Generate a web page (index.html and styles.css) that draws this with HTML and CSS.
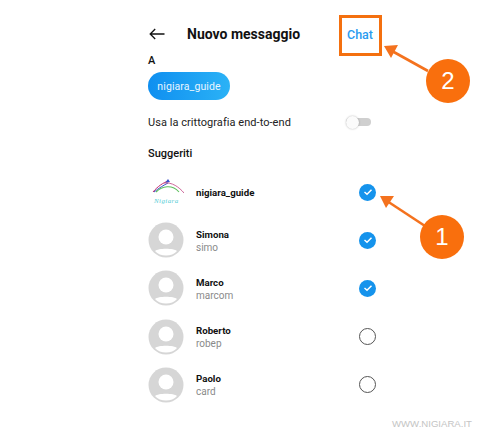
FILE: index.html
```html
<!DOCTYPE html>
<html lang="it">
<head>
<meta charset="utf-8">
<title>Nuovo messaggio</title>
<link rel="stylesheet" href="styles.css">
</head>
<body>
<main class="screen">
  <header class="topbar">
    <svg class="back" width="16" height="12" viewBox="0 0 16 12" aria-hidden="true"><path d="M15.5 6H1.2M6.2 1 1.2 6l5 5" fill="none" stroke="#111" stroke-width="1.3"/></svg>
    <h1 class="title">Nuovo messaggio</h1>
    <span class="chat">Chat</span>
  </header>
  <div class="label to">A</div>
  <div class="pill">nigiara_guide</div>
  <div class="crypt">
    <span>Usa la crittografia end-to-end</span>
    <span class="toggle"><span class="knob"></span></span>
  </div>
  <div class="label sugg">Suggeriti</div>
  <ul class="list">
    <li class="row">
      <svg class="avatar" width="36" height="36" viewBox="0 0 36 36" aria-hidden="true">
        <path d="M5 18C10 12 15 9 20 7" fill="none" stroke="#c2276e" stroke-width="1"/>
        <path d="M6 18C11 14 16 11 20 9" fill="none" stroke="#3a4fc8" stroke-width="1"/>
        <path d="M20 5 22 8 17 9Z" fill="#3a4fc8"/>
        <path d="M16 9C24 8 31 13 36 19" fill="none" stroke="#c8588f" stroke-width=".9"/>
        <path d="M8 18C14 12 24 10 31 18" fill="none" stroke="#5cc05c" stroke-width="1.1"/>
        <text class="logo-text" x="6" y="29">Nigiara</text>
      </svg>
      <div class="who"><div class="name">nigiara_guide</div></div>
      <span class="check on"><svg width="10" height="8" viewBox="0 0 10 8" aria-hidden="true"><path d="M1.5 4 4 6.2 8.5 1.8" fill="none" stroke="#fff" stroke-width="1.5"/></svg></span>
    </li>
    <li class="row">
      <svg class="avatar" width="36" height="36" viewBox="0 0 36 36" aria-hidden="true"><circle cx="18" cy="18" r="17.5" fill="#d6d6d6"/><circle cx="18" cy="15" r="7.5" fill="#fff"/><path d="M7 29c3-3 19-3 22 0-5 6-17 6-22 0Z" fill="#fff"/></svg>
      <div class="who"><div class="name">Simona</div><div class="sub">simo</div></div>
      <span class="check on"><svg width="10" height="8" viewBox="0 0 10 8" aria-hidden="true"><path d="M1.5 4 4 6.2 8.5 1.8" fill="none" stroke="#fff" stroke-width="1.5"/></svg></span>
    </li>
    <li class="row">
      <svg class="avatar" width="36" height="36" viewBox="0 0 36 36" aria-hidden="true"><circle cx="18" cy="18" r="17.5" fill="#d6d6d6"/><circle cx="18" cy="15" r="7.5" fill="#fff"/><path d="M7 29c3-3 19-3 22 0-5 6-17 6-22 0Z" fill="#fff"/></svg>
      <div class="who"><div class="name">Marco</div><div class="sub">marcom</div></div>
      <span class="check on"><svg width="10" height="8" viewBox="0 0 10 8" aria-hidden="true"><path d="M1.5 4 4 6.2 8.5 1.8" fill="none" stroke="#fff" stroke-width="1.5"/></svg></span>
    </li>
    <li class="row">
      <svg class="avatar" width="36" height="36" viewBox="0 0 36 36" aria-hidden="true"><circle cx="18" cy="18" r="17.5" fill="#d6d6d6"/><circle cx="18" cy="15" r="7.5" fill="#fff"/><path d="M7 29c3-3 19-3 22 0-5 6-17 6-22 0Z" fill="#fff"/></svg>
      <div class="who"><div class="name">Roberto</div><div class="sub">robep</div></div>
      <span class="check"></span>
    </li>
    <li class="row">
      <svg class="avatar" width="36" height="36" viewBox="0 0 36 36" aria-hidden="true"><circle cx="18" cy="18" r="17.5" fill="#d6d6d6"/><circle cx="18" cy="15" r="7.5" fill="#fff"/><path d="M7 29c3-3 19-3 22 0-5 6-17 6-22 0Z" fill="#fff"/></svg>
      <div class="who"><div class="name">Paolo</div><div class="sub">card</div></div>
      <span class="check"></span>
    </li>
  </ul>
</main>
<svg class="arrows" width="500" height="440" viewBox="0 0 500 440" aria-hidden="true">
  <path d="M428 71 392 51" stroke="#f4721e" stroke-width="2.6"/>
  <path d="M384 46 398 45 391 58Z" fill="#f4721e"/>
  <path d="M425 226 387 201" stroke="#f4721e" stroke-width="2.6"/>
  <path d="M380 196 394 196 386 208Z" fill="#f4721e"/>
</svg>
<div class="badge b2">2</div>
<div class="badge b1">1</div>
<div class="mark">WWW.NIGIARA.IT</div>
</body>
</html>
```
FILE: styles.css
```css
* { box-sizing: border-box; }
html, body { margin: 0; height: 440px; overflow: hidden; background: #fff; }
body { font-family: Roboto, "Liberation Sans", sans-serif; color: #111; position: relative; }
.screen { width: 384px; padding: 15px 0 0 148px; }
.topbar { display: flex; align-items: center; height: 41px; }
.back { flex: none; margin: 0 0 4px 1px; }
.title { margin: 0 0 4px 22px; font-size: 14px; font-weight: 700; line-height: 18px; white-space: nowrap; flex: none; width: 153px; }
.chat { width: 43px; height: 41px; margin-left: -1px; border: 3px solid #f4700f; color: #2a9bf0; font-size: 12.5px; font-weight: 500; display: flex; align-items: center; justify-content: center; padding: 0 1px 3px 0; }
.label { font-size: 11px; font-weight: 500; line-height: 14px; }
.to { margin-top: -2px; height: 14px; }
.pill { margin-top: 4px; width: 82px; height: 28px; border-radius: 14px; background: linear-gradient(90deg, #0f8ff0, #2bb2f6); color: #e8f5ff; font-size: 10.5px; display: flex; align-items: center; justify-content: center; letter-spacing: .1px; }
.crypt { margin-top: 14px; height: 16px; display: flex; align-items: center; font-size: 11px; color: #222; letter-spacing: .05px; }
.toggle { position: relative; margin-left: 55px; width: 25px; height: 8px; border-radius: 4px; background: #cfcfcf; }
.knob { position: absolute; left: 0; top: -2.5px; width: 13px; height: 13px; border-radius: 50%; background: #fbfbfb; box-shadow: 0 0 2px rgba(0,0,0,.3); }
.sugg { margin-top: 17px; }
.list { list-style: none; margin: 7px 0 0; padding: 0; }
.row { display: flex; align-items: center; height: 48.2px; }
.avatar { flex: none; }
.logo-text { font-family: "Liberation Serif", serif; font-style: italic; font-size: 7px; fill: #58cdd6; letter-spacing: .4px; }
.who { flex: none; width: 163px; margin-left: 12px; font-size: 9.7px; line-height: 13px; padding-top: 1px; }
.name { font-weight: 700; color: #111; }
.sub { color: #8a8a8a; font-size: 10px; }
.check { flex: none; width: 17px; height: 17px; border-radius: 50%; border: 1.5px solid #555; display: flex; align-items: center; justify-content: center; }
.check.on { border: 0; background: #1593ec; }
.arrows { position: absolute; left: 0; top: 0; }
.badge { position: absolute; width: 44px; height: 44px; border-radius: 50%; background: #f96f0d; color: #fff; font-family: "Liberation Sans", sans-serif; font-size: 24px; line-height: 44px; text-align: center; }
.b2 { left: 426px; top: 59px; }
.b1 { left: 420px; top: 215px; }
.mark { position: absolute; left: 392px; top: 418px; font-family: "Liberation Sans", sans-serif; font-size: 9.6px; line-height: 12px; color: #c4c4c4; white-space: nowrap; }
```
